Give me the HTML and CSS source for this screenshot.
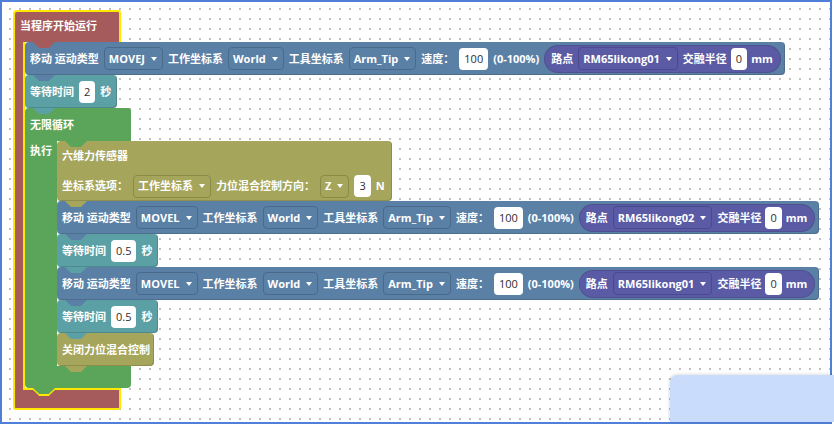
FILE: index.html
```html
<!DOCTYPE html>
<html lang="zh">
<head>
<meta charset="utf-8">
<title>Blockly</title>
<link rel="stylesheet" href="styles.css">
</head>
<body>
<div class="workspace">
  <div class="hat">
    <div class="hat-top">当程序开始运行</div>
    <div class="hat-mid">
      <div class="hat-arm"></div>
      <div class="stack">
        <div class="blk move">
          <span>移动 运动类型</span>
          <span class="dd">MOVEJ<i class="arrow"></i></span>
          <span>工作坐标系</span>
          <span class="dd">World<i class="arrow"></i></span>
          <span>工具坐标系</span>
          <span class="dd">Arm_Tip<i class="arrow"></i></span>
          <span>速度：</span>
          <span class="num">100</span>
          <span>(0-100%)</span>
          <span class="pill"><span>路点</span><span class="dd">RM65likong01<i class="arrow"></i></span><span>交融半径</span><span class="num">0</span><span>mm</span></span>
        </div>
        <div class="blk wait">
          <span>等待时间</span>
          <span class="num">2</span>
          <span>秒</span>
        </div>
        <div class="loop">
          <div class="loop-top">无限循环</div>
          <div class="loop-mid">
            <div class="loop-arm">执行</div>
            <div class="stack">
              <div class="blk force">
                <div class="row"><span>六维力传感器</span></div>
                <div class="row">
                  <span>坐标系选项：</span>
                  <span class="dd">工作坐标系<i class="arrow"></i></span>
                  <span>力位混合控制方向：</span>
                  <span class="dd">Z<i class="arrow"></i></span>
                  <span class="num">3</span>
                  <span>N</span>
                </div>
              </div>
              <div class="blk move">
                <span>移动 运动类型</span>
                <span class="dd">MOVEL<i class="arrow"></i></span>
                <span>工作坐标系</span>
                <span class="dd">World<i class="arrow"></i></span>
                <span>工具坐标系</span>
                <span class="dd">Arm_Tip<i class="arrow"></i></span>
                <span>速度：</span>
                <span class="num">100</span>
                <span>(0-100%)</span>
                <span class="pill"><span>路点</span><span class="dd">RM65likong02<i class="arrow"></i></span><span>交融半径</span><span class="num">0</span><span>mm</span></span>
              </div>
              <div class="blk wait">
                <span>等待时间</span>
                <span class="num">0.5</span>
                <span>秒</span>
              </div>
              <div class="blk move">
                <span>移动 运动类型</span>
                <span class="dd">MOVEL<i class="arrow"></i></span>
                <span>工作坐标系</span>
                <span class="dd">World<i class="arrow"></i></span>
                <span>工具坐标系</span>
                <span class="dd">Arm_Tip<i class="arrow"></i></span>
                <span>速度：</span>
                <span class="num">100</span>
                <span>(0-100%)</span>
                <span class="pill"><span>路点</span><span class="dd">RM65likong01<i class="arrow"></i></span><span>交融半径</span><span class="num">0</span><span>mm</span></span>
              </div>
              <div class="blk wait">
                <span>等待时间</span>
                <span class="num">0.5</span>
                <span>秒</span>
              </div>
              <div class="blk close">
                <span>关闭力位混合控制</span>
              </div>
            </div>
          </div>
          <div class="loop-bottom"></div>
        </div>
      </div>
    </div>
    <div class="hat-bottom"></div>
  </div>
</div>
<div class="panel"></div>
</body>
</html>
```

FILE: styles.css
```css
* { box-sizing: border-box; }
html, body { margin: 0; padding: 0; background: #fff; }
body {
  position: relative;
  width: 834px;
  height: 426px;
  overflow: hidden;
  font-family: "Open Sans", "Noto Sans CJK SC", sans-serif;
  font-size: 11px;
  font-weight: 700;
  line-height: 14px;
  color: #fff;
}
.workspace {
  width: 832px;
  height: 424px;
  border: 2px solid #4f7fd6;
  padding: 8px 0 0 11px;
  background-color: #fff;
  background-image: radial-gradient(circle at 1px 1px, #c2c2c2 0.8px, transparent 1.3px);
  background-size: 10px 10px;
  background-position: 7px 6px;
}
.hat { display: flex; flex-direction: column; align-items: flex-start; width: max-content; }
.hat-top {
  position: relative;
  width: 108px;
  height: 32px;
  background: #a55b5b;
  border: 2px solid #ffe800;
  border-bottom: none;
  border-radius: 4px 3px 0 0;
  padding: 7px 0 0 5px;
}
.hat-top::after {
  content: "";
  position: absolute;
  left: 18px;
  top: 100%;
  width: 22px;
  height: 6px;
  background: #a55b5b;
  clip-path: polygon(0 0, 100% 0, 72% 100%, 28% 100%);
  z-index: 5;
}
.hat-mid { display: flex; }
.hat-arm {
  width: 12px;
  background: #a55b5b;
  border-left: 2px solid #ffe800;
  border-right: 2px solid #ffe800;
}
.hat-bottom {
  position: relative;
  width: 108px;
  height: 22px;
  background: #a55b5b;
  border: 2px solid #ffe800;
  border-top: none;
  border-radius: 0 0 3px 3px;
}
.hat-bottom::before {
  content: "";
  position: absolute;
  left: 8px;
  right: -2px;
  top: 0;
  height: 2px;
  background: #ffe800;
}
.hat-bottom::after {
  content: "";
  position: absolute;
  left: 16px;
  top: 0;
  width: 26px;
  height: 8px;
  background: #ffe800;
  clip-path: polygon(0 0, 100% 0, 68% 100%, 32% 100%);
  z-index: 4;
}
.stack { display: flex; flex-direction: column; align-items: flex-start; }

.blk {
  position: relative;
  display: flex;
  align-items: center;
  gap: 5px;
  height: 33px;
  padding: 0 4px 0 5px;
  border-radius: 4px;
  white-space: nowrap;
  box-shadow: inset -1px -1px 0 rgba(0, 0, 0, 0.14);
}
.blk::after {
  content: "";
  position: absolute;
  left: 8px;
  top: 100%;
  width: 22px;
  height: 6px;
  background: inherit;
  clip-path: polygon(0 0, 100% 0, 72% 100%, 28% 100%);
  z-index: 5;
}
.move { background: #5b80a5; }
.move .dd { border-color: #4a6a8c; }
.wait { background: #5ba0a5; padding-right: 6px; }
.force {
  background: #a5a55b;
  flex-direction: column;
  align-items: flex-start;
  height: 60px;
  gap: 0;
  padding: 0 7px 0 5px;
}
.force .row { display: flex; align-items: center; gap: 5px; height: 30px; }
.force .dd { border-color: #8b8b48; }
.close { background: #a5a55b; padding-right: 4px; }

.pill {
  display: flex;
  align-items: center;
  gap: 4px;
  height: 28px;
  padding: 0 8px 0 7px;
  border-radius: 14px;
  background: #5b5ba5;
  box-shadow: inset 0 0 0 1px rgba(0, 0, 0, 0.12);
}
.pill .dd { border-color: #494990; margin: 0 1px; }

.dd {
  display: inline-flex;
  align-items: center;
  gap: 6px;
  height: 23px;
  padding: 0 5px 0 4px;
  border: 1px solid rgba(0, 0, 0, 0.2);
  border-radius: 4px;
}
.arrow {
  width: 0;
  height: 0;
  border-left: 3.5px solid transparent;
  border-right: 3.5px solid transparent;
  border-top: 4px solid #fff;
}
.num {
  display: inline-flex;
  align-items: center;
  justify-content: center;
  height: 22px;
  padding: 0 5px;
  background: #fff;
  color: #2e2e2e;
  font-weight: 400;
  border-radius: 4px;
}

.loop { display: flex; flex-direction: column; align-items: flex-start; }
.loop-top {
  position: relative;
  width: 106px;
  height: 33px;
  background: #5ba55b;
  padding-left: 5px;
  display: flex;
  align-items: center;
  border-radius: 4px 3px 0 0;
}
.loop-top::after {
  content: "";
  position: absolute;
  left: 40px;
  top: 100%;
  width: 22px;
  height: 6px;
  background: #5ba55b;
  clip-path: polygon(0 0, 100% 0, 72% 100%, 28% 100%);
  z-index: 5;
}
.loop-mid { display: flex; }
.loop-arm {
  width: 32px;
  background: #5ba55b;
  padding: 3px 0 0 5px;
}
.loop-bottom {
  position: relative;
  width: 106px;
  height: 22px;
  background: #5ba55b;
  border-radius: 0 0 4px 4px;
}
.loop-bottom::after {
  content: "";
  position: absolute;
  left: 8px;
  top: 100%;
  width: 22px;
  height: 6px;
  background: #5ba55b;
  clip-path: polygon(0 0, 100% 0, 72% 100%, 28% 100%);
  z-index: 5;
}
.panel {
  position: absolute;
  left: 670px;
  top: 375px;
  width: 164px;
  height: 47px;
  background: #cadcfc;
  border-top-left-radius: 8px;
  box-shadow: -1px -1px 3px rgba(0, 0, 0, 0.12);
}
```
